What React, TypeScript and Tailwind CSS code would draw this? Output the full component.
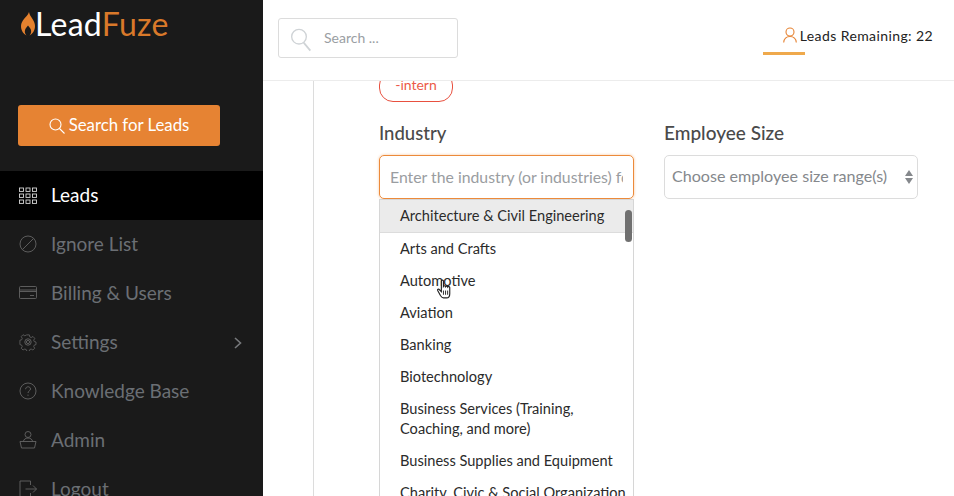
import React from "react";

const font = "font-['Lato','Liberation_Sans',sans-serif]";

function Icon({ children, className = "" }: { children: React.ReactNode; className?: string }) {
  return (
    <svg viewBox="0 0 18 18" width="18" height="18" fill="none" stroke="currentColor" strokeWidth="0.9" className={className}>
      {children}
    </svg>
  );
}

const GridIcon = () => (
  <Icon>
    {[1, 7, 13].map((y) =>
      [0.5, 7, 13.5].map((x) => <rect key={`${x}-${y}`} x={x} y={y} width="4" height="3.4" />)
    )}
  </Icon>
);

const navItems: { label: string; icon: React.ReactNode; arrow?: boolean }[] = [
  {
    label: "Ignore List",
    icon: (
      <Icon>
        <circle cx="9" cy="9" r="8" />
        <path d="M3.5 14.5 14.5 3.5" />
      </Icon>
    ),
  },
  {
    label: "Billing & Users",
    icon: (
      <Icon>
        <rect x="0.5" y="2.5" width="17" height="12" rx="1" />
        <path d="M0.5 6h17M0.5 7.5h17M11 11.5h4" />
      </Icon>
    ),
  },
  {
    label: "Settings",
    arrow: true,
    icon: (
      <Icon>
        <path d="M7.5 1h3l.5 2.3 1.6.7 2-1.2 2 2.1-1.2 2 .6 1.6 2 .5v2.9l-2 .6-.6 1.5 1.1 2-2 2-2-1.1-1.5.6-.5 2h-3l-.5-2-1.6-.6-2 1.1-2-2 1.1-2-.6-1.5-2-.6V7l2-.5.6-1.6-1.1-2 2-2.1 2 1.2 1.5-.7z" transform="translate(1 1) scale(.89)" />
        <circle cx="9" cy="9" r="3.2" />
        <circle cx="9" cy="9" r="1.6" />
      </Icon>
    ),
  },
  {
    label: "Knowledge Base",
    icon: (
      <Icon>
        <circle cx="9" cy="9" r="8" />
        <path d="M6.6 7.2c0-3.2 4.9-3.2 4.9-.2 0 1.9-2.5 1.9-2.5 4" />
        <path d="M9 12.6v1.2" />
      </Icon>
    ),
  },
  {
    label: "Admin",
    icon: (
      <Icon>
        <circle cx="9" cy="3.5" r="3" />
        <path d="M4.5 10.5c0-2 2-3.5 4.5-3.5s4.5 1.5 4.5 3.5" />
        <path d="M1 10.5h16l-1.5 6.5h-13z" />
      </Icon>
    ),
  },
  {
    label: "Logout",
    icon: (
      <Icon>
        <path d="M11.5 5V1H1v16h10.5v-4" />
        <path d="M6.5 9h11M14 5.500 17.500 9 14 12.500" />
      </Icon>
    ),
  },
];

const industries = [
  "Architecture & Civil Engineering",
  "Arts and Crafts",
  "Automotive",
  "Aviation",
  "Banking",
  "Biotechnology",
  "Business Services (Training, Coaching, and more)",
  "Business Supplies and Equipment",
  "Charity, Civic & Social Organization",
];

function Sidebar() {
  return (
    <aside className="w-[263px] h-full shrink-0 bg-[#1a1a1a] overflow-hidden">
      <div className="flex items-start pl-[21px] pt-[6px] h-[105px]">
        <svg viewBox="0 0 14 24" width="14" height="24" className="mt-[6px]">
          <path
            fill="#e5822f"
            d="M8 0c.5 3 2 4.5 3.5 7C13 9.5 14 11.5 14 14c0 4.5-2.5 8-5.5 9.5 1.8-1.8 2-4 1.3-6-.5-1.5-1.8-2.6-2.8-4-1 1.4-2.3 2.5-2.800 4-.7 2-.5 4.200 1.300 6C2.500 22 0 18.500 0 14c0-3 1.500-5 3-7 1.500-2 4-3.500 5-7z"
          />
        </svg>
        <span className={`${font} text-[32px] leading-[36px] tracking-[0.25px] text-white`}>
          Lead<span className="text-[#d9792a]">Fuze</span>
        </span>
      </div>
      <div className="px-[18px]">
        <button className={`${font} w-[202px] h-[41px] rounded-[3px] bg-[#e68333] text-white text-[16.8px] flex items-center justify-center gap-[4px]`}>
          <svg viewBox="0 0 16 16" width="16" height="16" fill="none" stroke="white" strokeWidth="1.1">
            <circle cx="6.5" cy="6.5" r="5.5" />
            <path d="m10.5 10.500 5 5" />
          </svg>
          <span className="mb-[1px]">Search for Leads</span>
        </button>
      </div>
      <nav className={`${font} mt-[25px] text-[19px]`}>
        <div className="h-[49px] bg-black flex items-center pl-[19px] text-white">
          <span className="text-[#d8d8d8] w-[32px] flex"><GridIcon /></span>
          <span className="mb-[1px]">Leads</span>
        </div>
        {navItems.map((item) => (
          <div key={item.label} className="h-[49px] flex items-center pl-[19px] pr-[21px] text-[#6b6f74]">
            <span className="text-[#646464] w-[32px] flex mb-[2px]">{item.icon}</span>
            <span className="flex-1 mb-[1px]">{item.label}</span>
            {item.arrow && (
              <svg viewBox="0 0 8 12" width="8" height="12" fill="none" stroke="#77797c" strokeWidth="1.6">
                <path d="m1 1 5.5 5L1 11" />
              </svg>
            )}
          </div>
        ))}
      </nav>
    </aside>
  );
}

function Header() {
  return (
    <header className="h-[81px] shrink-0 bg-white border-b border-[#ececec] flex items-start justify-between pl-[15px] pr-[21px] pt-[18px]">
      <div className="w-[180px] h-[40px] border border-[#dcdcdc] rounded-[3px] flex items-center pl-[11px]">
        <svg viewBox="0 0 16 18" width="22" height="24" fill="none" stroke="#cfd3d6" strokeWidth="1" className="mt-[4px]">
          <circle cx="6.5" cy="6.5" r="5.5" />
          <path d="m10 11 5 6" strokeWidth="1.3" />
        </svg>
        <span className={`${font} ml-[12px] mb-[2px] text-[14px] text-[#9a9ea3]`}>Search ...</span>
      </div>
      <div className="flex flex-col items-start pt-[7px]">
        <div className={`${font} flex items-center h-[21px] pl-[20px] text-[14px] text-[#222] tracking-[0.4px]`}>
          <svg viewBox="0 0 14 16" width="14" height="16" fill="none" stroke="#e68333" strokeWidth="1.1" className="mr-[3px] mb-[2px]">
            <circle cx="7" cy="5" r="4" />
            <path d="M.7 15.5c.3-3.5 2.5-6 6.3-6s6 2.5 6.300 6" />
          </svg>
          Leads Remaining: 22
        </div>
        <div className="w-[42px] h-[3px] mt-[6px] bg-[#efa94c]" />
      </div>
    </header>
  );
}

function IndustryField() {
  return (
    <div className="w-[255px] relative">
      <div className="text-[18.5px] leading-[24px] font-medium text-[#4a4a4a]">Industry</div>
      <div className="mt-[10px] h-[44px] rounded-[5px] border border-[#ec8a3a] shadow-[0_0_3px_#f5c59c] flex items-center pl-[10px] pr-[10px] overflow-hidden">
        <span className="text-[15.8px] text-[#9a9da1] whitespace-nowrap overflow-hidden mb-[1px]">
          Enter the industry (or industries) for
        </span>
      </div>
      <div className="absolute left-0 top-[78px] w-full h-[400px] bg-white border border-[#d6d6d6] overflow-hidden">
        {industries.map((name, i) => (
          <div
            key={name}
            className={`pl-[20px] pr-[6px] py-[6px] text-[14.6px] leading-[20px] text-[#2b2b2b] ${
              i === 0 ? "bg-[#ebebeb] border-b border-[#dcdcdc]" : ""
            }`}
          >
            {name}
          </div>
        ))}
        <div className="absolute right-[1px] top-[10px] w-[7px] h-[32px] rounded-full bg-[#707070]" />
      </div>
      <svg viewBox="0 0 16 20" width="17" height="21" className="absolute left-[57px] top-[158px]">
        <path
          fill="#fff"
          stroke="#222"
          strokeWidth="1.1"
          d="M5 2c0-1.3 2-1.3 2 0v5c.5-.8 2-.8 2 .2.5-.7 2-.5 2 .4.5-.6 2-.4 2 .5V14c0 2-1 4-3 4H7c-1.5 0-2-1-3-2.5L1.5 11c-.5-1 .8-1.8 1.5-1L5 12z"
        />
        <path stroke="#222" strokeWidth=".9" d="M7 11v4M9 11v4M11 11v4" />
      </svg>
    </div>
  );
}

function EmployeeField() {
  return (
    <div className="w-[254px]">
      <div className="text-[19px] leading-[24px] font-medium text-[#4a4a4a]">Employee Size</div>
      <div className="mt-[10px] h-[44px] rounded-[5px] border border-[#dcdcdc] flex items-center justify-between pl-[7px] pr-[4px]">
        <span className="text-[16.1px] text-[#85888c] mb-[1px]">Choose employee size range(s)</span>
        <svg viewBox="0 0 8 14" width="8" height="14" fill="#85888c">
          <path d="M4 0 8 6H0zM4 14 0 8h8z" />
        </svg>
      </div>
    </div>
  );
}

export default function App() {
  return (
    <div className={`${font} w-[954px] h-[496px] flex overflow-hidden bg-white`}>
      <Sidebar />
      <main className="flex-1 flex flex-col min-w-0">
        <Header />
        <div className="flex-1 ml-[50px] border-l border-[#dcdcdc] pl-[65px] overflow-hidden">
          <div className="-mt-[10px] w-[74px] h-[31px] border border-[#e8503f] rounded-[14px] flex items-center justify-center pb-[4px] text-[14px] text-[#ec5a48] bg-white">
            -intern
          </div>
          <div className="flex gap-[30px] mt-[19px]">
            <IndustryField />
            <EmployeeField />
          </div>
        </div>
      </main>
    </div>
  );
}
